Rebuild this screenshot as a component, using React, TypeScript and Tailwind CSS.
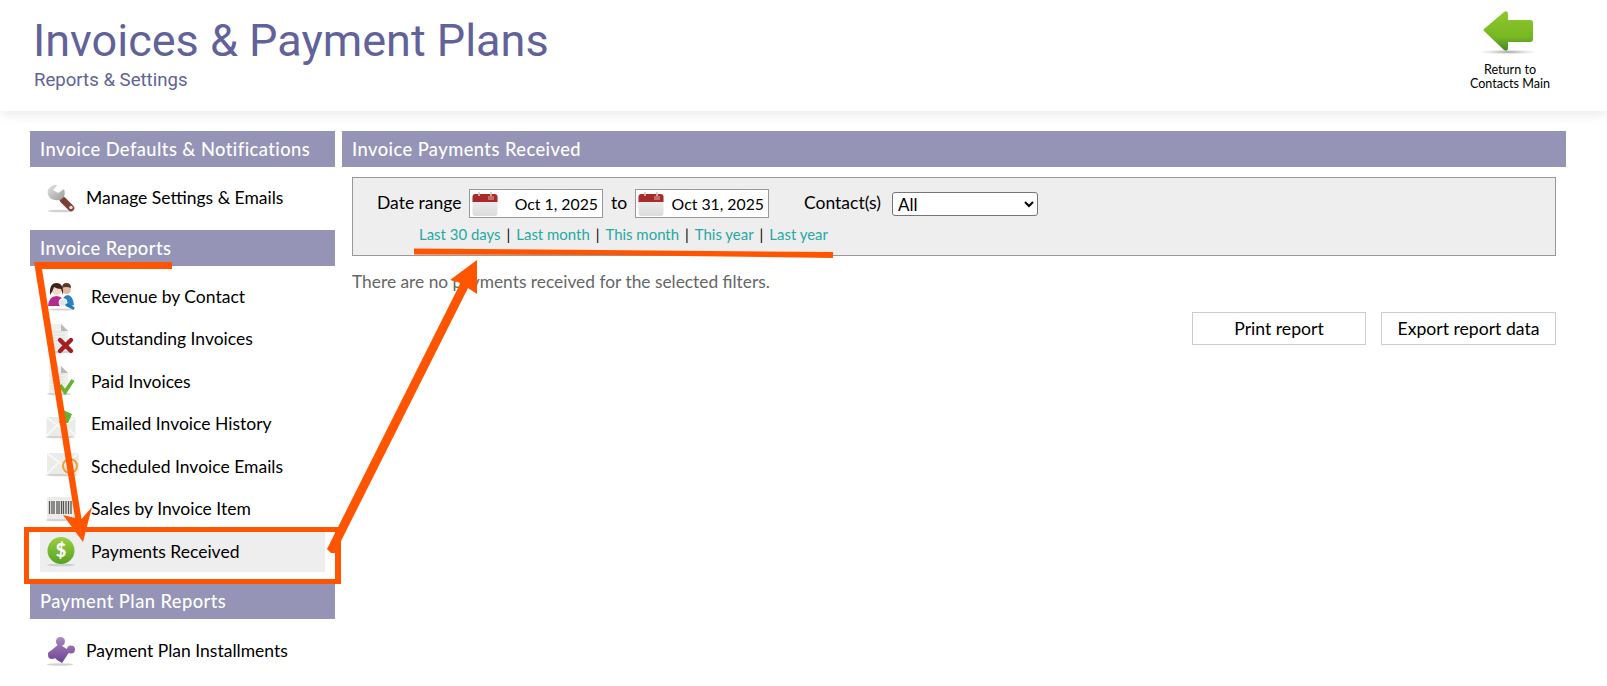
import React from "react";

const Shadow = ({ cx = 16, y = 30, rx = 14 }: { cx?: number; y?: number; rx?: number }) => (
  <ellipse cx={cx} cy={y} rx={rx} ry={1.3} fill="#c4c4c4" opacity={0.75} />
);

const Wrench = () => (
  <svg width="30" height="32" viewBox="0 0 30 32">
    <defs>
      <linearGradient id="gw" x1="0" y1="0" x2="1" y2="1">
        <stop offset="0" stopColor="#e4e4e4" />
        <stop offset="1" stopColor="#9a9a9a" />
      </linearGradient>
    </defs>
    <Shadow cx={15} y={29} rx={13} />
    <path d="M17 18 L25 26" stroke="#7d3f33" strokeWidth="6.5" strokeLinecap="round" />
    <circle cx="25" cy="25.5" r="1.8" fill="#e8d8d4" />
    <path d="M8 3 Q2 5 1.5 10 Q2 17 9 18 Q14 19 17 16 Q20 12 18 7 L12 11 L7 8 L11 3.5 Q9.5 2.5 8 3Z" fill="url(#gw)" />
  </svg>
);

const People = () => (
  <svg width="32" height="32" viewBox="0 0 32 32">
    <ellipse cx="16" cy="29.5" rx="13" ry="1" fill="#d4d4d4" />
    <circle cx="20.5" cy="9.5" r="4.5" fill="#e3b9a0" />
    <path d="M16 8 Q16 3 20.5 3 Q25 3 25 8 Q20 6 16 8Z" fill="#5c3a25" />
    <path d="M15 22 Q18 15 22 15 Q27 16 28 25 L22 27Z" fill="#2c82c0" />
    <circle cx="10.5" cy="10" r="5" fill="#f3d6c4" />
    <path d="M4 15 Q3 3 10.5 3 Q18 3 17 15 L15 9 Q11 9 8 7 L6.5 11Z" fill="#3e2418" />
    <path d="M2 26 Q3 16 10.5 16 Q18 16 19 26Z" fill="#b32a90" />
    <circle cx="17" cy="22.5" r="4" fill="#dfe6ea" stroke="#fff" strokeWidth="1" />
    <path d="M21 25 L27 28" stroke="#1f78b8" strokeWidth="3" strokeLinecap="round" />
  </svg>
);

const Doc = () => (
  <>
    <Shadow cx={13} y={29} rx={12} />
    <path d="M3 1 H15 L22 8 V28 H3Z" fill="#f0f0ec" />
    <path d="M15 1 L22 8 H15Z" fill="#b8b8b8" />
    <path d="M5 9 H19 M5 12 H19 M5 15 H19 M5 18 H19 M5 21 H19 M5 24 H19" stroke="#dedeDA" strokeWidth="1" />
  </>
);

const DocX = () => (
  <svg width="32" height="32" viewBox="0 0 32 32">
    <Doc />
    <path d="M14 17 L25 28 M25 17 L14 28" stroke="#a61e22" strokeWidth="4.4" strokeLinecap="round" />
  </svg>
);

const DocCheck = () => (
  <svg width="32" height="32" viewBox="0 0 32 32">
    <Doc />
    <path d="M14 20 L19 27 L27 15" fill="none" stroke="#65b32e" strokeWidth="3.6" />
  </svg>
);

const MailCheck = () => (
  <svg width="32" height="32" viewBox="0 0 32 32">
    <Shadow cx={14} y={29} rx={15} />
    <rect x="0.5" y="9" width="29" height="19" rx="1" fill="#ebebe8" />
    <path d="M0.5 9 L15 20 L29.5 9 M0.5 28 L11 17 M29.5 28 L19 17" fill="none" stroke="#fbfbfb" strokeWidth="1.5" />
    <path d="M17 2 L26 6 L22 15 L13 15Z" fill="#5fb52f" />
  </svg>
);

const MailClock = () => (
  <svg width="36" height="32" viewBox="0 0 36 32">
    <Shadow cx={16} y={25} rx={16} />
    <rect x="1" y="3" width="32" height="21" rx="1" fill="#ebebe8" />
    <path d="M1 3 L17 15 L33 3 M1 24 L12 13 M33 24 L23 13" fill="none" stroke="#fbfbfb" strokeWidth="1.5" />
    <circle cx="24" cy="16" r="7" fill="none" stroke="#f0a030" strokeWidth="2" />
  </svg>
);

const Barcode = () => (
  <svg width="32" height="32" viewBox="0 0 32 32">
    <Shadow cx={14} y={27} rx={15} />
    <rect x="1" y="4" width="27" height="22" rx="1" fill="#ececea" />
    <path d="M3.5 8 V21 M6 8 V21 M8 8 V21 M11 8 V21 M13 8 V21 M15.5 8 V21 M17.5 8 V21 M20 8 V21 M22.5 8 V21 M25 8 V21" stroke="#555" strokeWidth="1.3" />
  </svg>
);

const Dollar = () => (
  <svg width="30" height="32" viewBox="0 0 30 32">
    <defs>
      <linearGradient id="gd" x1="0" y1="0" x2="0" y2="1">
        <stop offset="0" stopColor="#9ccf45" />
        <stop offset="1" stopColor="#55a321" />
      </linearGradient>
    </defs>
    <Shadow cx={15} y={30} rx={14} />
    <circle cx="15" cy="15.5" r="13.5" fill="url(#gd)" />
    <text x="15" y="21.5" textAnchor="middle" fontSize="18" fontWeight="900" fill="#fff" fontFamily="Lato, sans-serif">$</text>
  </svg>
);

const Puzzle = () => (
  <svg width="30" height="32" viewBox="0 0 30 32">
    <defs>
      <linearGradient id="gp" gradientUnits="userSpaceOnUse" x1="0" y1="2" x2="0" y2="29">
        <stop offset="0" stopColor="#a98ac0" />
        <stop offset="1" stopColor="#6d3f8f" />
      </linearGradient>
    </defs>
    <Shadow cx={14} y={29.5} rx={13} />
    <path d="M2 18 L13 9 L24 16 L16 28 L11 25 L9 23 L5 23Z" fill="url(#gp)" />
    <circle cx="14.5" cy="6.5" r="4.5" fill="url(#gp)" />
    <circle cx="25" cy="14.5" r="4" fill="url(#gp)" />
    <circle cx="6" cy="20" r="4" fill="url(#gp)" />
  </svg>
);

const Calendar = () => (
  <svg width="26" height="26" viewBox="0 0 26 26">
    <defs>
      <linearGradient id="gc" x1="0" y1="0" x2="0" y2="1">
        <stop offset="0" stopColor="#f4f4f4" />
        <stop offset="1" stopColor="#dcdcdc" />
      </linearGradient>
    </defs>
    <rect x="0.5" y="3" width="25" height="22" rx="3" fill="url(#gc)" />
    <path d="M0.5 11 V6 Q0.5 3 3.5 3 H22.5 Q25.5 3 25.5 6 V11Z" fill="#a92a2a" />
    <path d="M7 1 V5 M19 1 V5" stroke="#c9c9c9" strokeWidth="1.6" />
    <rect x="16" y="5" width="6" height="4" fill="#c76a6a" />
  </svg>
);

const BackArrow = () => (
  <svg className="mr-[4px]" width="56" height="44" viewBox="0 0 56 44">
    <defs>
      <linearGradient id="ga" x1="0" y1="0" x2="0" y2="1">
        <stop offset="0" stopColor="#8ec72c" />
        <stop offset="0.65" stopColor="#78b722" />
        <stop offset="1" stopColor="#3f8b22" />
      </linearGradient>
      <radialGradient id="gs">
        <stop offset="0" stopColor="#999" />
        <stop offset="1" stopColor="#ddd" stopOpacity="0.2" />
      </radialGradient>
    </defs>
    <ellipse cx="28" cy="41" rx="28" ry="2.2" fill="url(#gs)" />
    <path d="M4 20 Q3 19 4 18 L24 1 Q28 -1 28 3 V9 H50 Q53 9 53 12 V28 Q53 31 50 31 H28 V37 Q28 41 24 39Z" fill="url(#ga)" />
  </svg>
);

const SectionBar = ({ title }: { title: string }) => (
  <div className="h-9 flex items-center pl-[10px] pt-[2px] bg-[#9594b6] text-white font-['Lato',sans-serif] text-[18.3px] font-medium tracking-[0.45px]">
    {title}
  </div>
);

const SideRow = ({
  icon,
  label,
  active,
  wide,
}: {
  icon: React.ReactNode;
  label: string;
  active?: boolean;
  wide?: boolean;
}) => (
  <div className={`h-[41px] mb-[1.5px] ml-[10px] mr-[10px] flex items-center ${active ? "bg-[#eeeeee]" : ""}`}>
    <span className={`${wide ? "w-[46px]" : "w-[51px]"} pl-[6px] flex items-center shrink-0`}>{icon}</span>
    <span className="pt-[2px] text-[17.5px] text-black">{label}</span>
  </div>
);

const links = ["Last 30 days", "Last month", "This month", "This year", "Last year"];

const Overlay = () => (
  <svg className="absolute inset-0 pointer-events-none" width="1607" height="686" viewBox="0 0 1607 686">
    <g fill="#ff5500">
      <path d="M34 262 H172 V269 H42 L81.5 519 L92 507 L83 542 L63 515 L75 518 L35 268Z" />
      <path d="M24 527 H341 V584 H24Z M29 532 V579 H335 V532Z" fillRule="evenodd" />
      <path d="M331 553 L327 549 L460.5 283 L450 280 L477 260 L477 294 L468 288 L335 553Z" />
      <path d="M414 248.5 L600 250 L833 252 L833 258 L600 255 L414 254.5Z" />
    </g>
  </svg>
);

export default function App() {
  return (
    <div className="relative w-[1607px] h-[686px] overflow-hidden bg-white font-['Lato',sans-serif] text-black">
      <header className="h-[111px] pl-[33px] pr-[57px] flex justify-between bg-white shadow-[0_2px_12px_rgba(0,0,0,0.1)]">
        <div className="pt-[14px] text-[#62629a] font-['Roboto',sans-serif]">
          <h1 className="text-[45px] leading-[54px] font-normal">Invoices &amp; Payment Plans</h1>
          <p className="pl-[1px] text-[18.6px] leading-[24px]">Reports &amp; Settings</p>
        </div>
        <div className="pt-[11px] flex flex-col items-center w-[80px] text-[12.6px] leading-[14px] text-center">
          <BackArrow />
          <div className="mt-[8px] whitespace-nowrap">
            Return to
            <br />
            Contacts Main
          </div>
        </div>
      </header>

      <div className="flex gap-[7px] pl-[30px] pt-[20px]">
        <aside className="w-[305px] shrink-0">
          <SectionBar title="Invoice Defaults & Notifications" />
          <div className="pt-[10px] pb-[10px]">
            <SideRow wide icon={<Wrench />} label="Manage Settings & Emails" />
          </div>
          <SectionBar title="Invoice Reports" />
          <div className="pt-[10px] pb-[10px]">
            <SideRow icon={<People />} label="Revenue by Contact" />
            <SideRow icon={<DocX />} label="Outstanding Invoices" />
            <SideRow icon={<DocCheck />} label="Paid Invoices" />
            <SideRow icon={<MailCheck />} label="Emailed Invoice History" />
            <SideRow icon={<MailClock />} label="Scheduled Invoice Emails" />
            <SideRow icon={<Barcode />} label="Sales by Invoice Item" />
            <SideRow active icon={<Dollar />} label="Payments Received" />
          </div>
          <SectionBar title="Payment Plan Reports" />
          <div className="pt-[11px]">
            <SideRow wide icon={<Puzzle />} label="Payment Plan Installments" />
          </div>
        </aside>

        <main className="w-[1224px] shrink-0">
          <SectionBar title="Invoice Payments Received" />
          <div className="mx-[10px] mt-[10px]">
            <div className="h-[79px] border border-[#999999] bg-[#eeeeee] pl-[24px] pt-[11px]">
              <div className="flex items-center h-[29px] text-[17.5px]">
                <span className="w-[92px]">Date range</span>
                <div className="w-[134px] h-[29px] border border-[#999999] bg-white flex items-center justify-between pl-[2px] pr-[4px] text-[15.8px]">
                  <Calendar />
                  <span>Oct 1, 2025</span>
                </div>
                <span className="w-[32px] text-center">to</span>
                <div className="w-[134px] h-[29px] border border-[#999999] bg-white flex items-center justify-between pl-[2px] pr-[4px] text-[15.8px]">
                  <Calendar />
                  <span>Oct 31, 2025</span>
                </div>
                <span className="ml-[35px] w-[88px] whitespace-nowrap">Contact(s)</span>
                <select className="w-[146px] h-[24px] border border-[#767676] rounded-[3px] bg-white text-[17px] pl-[1px] appearance-auto">
                  <option>All</option>
                </select>
              </div>
              <div className="mt-[6px] ml-[42px] flex items-center text-[14.95px] leading-[20px]">
                {links.map((l, i) => (
                  <React.Fragment key={l}>
                    {i > 0 && <span className="mx-[6px] text-black">|</span>}
                    <a className="text-[#25a9a5]">{l}</a>
                  </React.Fragment>
                ))}
              </div>
            </div>
            <p className="mt-[14px] text-[17.35px] leading-[24px] text-[#666666]">
              There are no payments received for the selected filters.
            </p>
            <div className="mt-[18px] flex justify-end gap-[15px] text-[17.6px]">
              <button className="w-[174px] h-[33px] pt-[2px] border border-[#cccccc] bg-white">Print report</button>
              <button className="w-[175px] h-[33px] pt-[2px] border border-[#cccccc] bg-white">Export report data</button>
            </div>
          </div>
        </main>
      </div>
      <Overlay />
    </div>
  );
}
